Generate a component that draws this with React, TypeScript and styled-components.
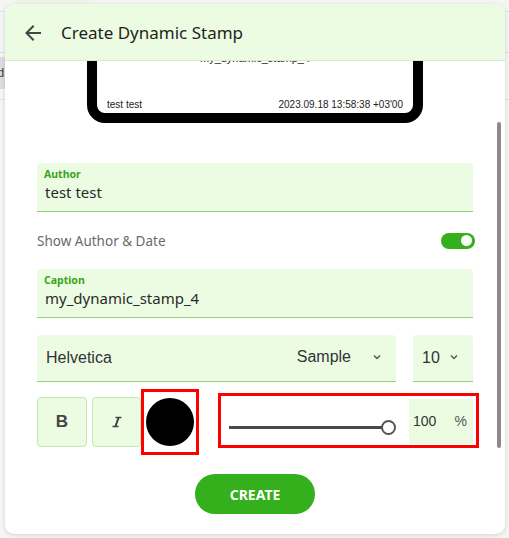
import { FC, useLayoutEffect, useRef } from 'react';
import styled, { createGlobalStyle } from 'styled-components';

const GlobalStyle = createGlobalStyle`
  html, body {
    margin: 0;
    padding: 0;
    height: 100%;
    overflow: hidden;
    background: #f5f5f5;
    font-family: 'Noto Sans', 'Open Sans', sans-serif;
  }
`;

const BackArrow: FC = () => (
  <svg width="24" height="24" viewBox="0 0 24 24">
    <path
      d="M20 11H7.83l5.59-5.59L12 4l-8 8 8 8 1.41-1.41L7.83 13H20v-2z"
      fill="#444"
    />
  </svg>
);

const Chevron: FC = () => (
  <svg width="10" height="10" viewBox="0 0 10 10">
    <path d="M2 3.5l3 3 3-3" fill="none" stroke="#555" strokeWidth="1.4" />
  </svg>
);

const ItalicIcon: FC = () => (
  <svg width="18" height="18" viewBox="0 0 24 24">
    <path d="M10 5v2h2.4l-3.6 10H6v2h8v-2h-2.4l3.6-10H18V5z" fill="#444" />
  </svg>
);

const App: FC = () => {
  const bodyRef = useRef<HTMLDivElement>(null);

  useLayoutEffect(() => {
    if (bodyRef.current) bodyRef.current.scrollTop = 88;
  }, []);

  return (
    <>
      <GlobalStyle />
      <Backdrop>
        <TabStrip>
          <Tab />
        </TabStrip>
        <ToolRow />
        <ListRow>
          <ListCell>d</ListCell>
        </ListRow>
      </Backdrop>

      <Dialog>
        <Header>
          <BackButton>
            <BackArrow />
          </BackButton>
          <Title>Create Dynamic Stamp</Title>
        </Header>

        <Body ref={bodyRef}>
          <Stamp>
            <StampCaption>my_dynamic_stamp_4</StampCaption>
            <StampFooter>
              <span>test test</span>
              <span>2023.09.18 13:58:38 +03'00</span>
            </StampFooter>
          </Stamp>

          <Field $gap={40}>
            <FieldLabel>Author</FieldLabel>
            <FieldValue>test test</FieldValue>
          </Field>

          <SwitchRow>
            <SwitchLabel>Show Author &amp; Date</SwitchLabel>
            <Switch>
              <Knob />
            </Switch>
          </SwitchRow>

          <Field $gap={0}>
            <FieldLabel>Caption</FieldLabel>
            <FieldValue>my_dynamic_stamp_4</FieldValue>
          </Field>

          <FontRow>
            <Select $grow>
              <SelectText>Helvetica</SelectText>
              <SelectSample>Sample</SelectSample>
              <Chevron />
            </Select>
            <Select $width={60}>
              <SelectText>10</SelectText>
              <Chevron />
            </Select>
          </FontRow>

          <StyleRow>
            <StyleButton>
              <BoldGlyph>B</BoldGlyph>
            </StyleButton>
            <StyleButton>
              <ItalicIcon />
            </StyleButton>
            <Highlight $pad="4px 2px">
              <ColorDot />
            </Highlight>
            <OpacityBox>
              <Slider>
                <SliderTrack />
                <SliderThumb />
              </Slider>
              <PercentField>
                <span>100</span>
                <PercentSign>%</PercentSign>
              </PercentField>
            </OpacityBox>
          </StyleRow>

          <Actions>
            <CreateButton>CREATE</CreateButton>
          </Actions>
        </Body>
        <ScrollThumb />
      </Dialog>
    </>
  );
};

export default App;

const Backdrop = styled.div`
  display: flex;
  flex-direction: column;
  height: 100vh;
  background: #f5f5f5;
`;

const TabStrip = styled.div`
  height: 11px;
  border-bottom: 1px solid #e2e2e2;
  padding-left: 15px;
`;

const Tab = styled.div`
  width: 80px;
  height: 8px;
  border-radius: 0 0 12px 12px;
  background: #eef6ea;
`;

const ToolRow = styled.div`
  height: 40px;
  border-bottom: 1px solid #dcdcdc;
`;

const ListRow = styled.div`
  height: 42px;
  padding-top: 4px;
  border-bottom: 1px solid #e2e2e2;
`;

const ListCell = styled.div`
  width: 6px;
  height: 32px;
  background: #dcdcdc;
  color: #444;
  font-family: 'Liberation Sans', Arial, sans-serif;
  font-size: 13px;
  line-height: 32px;
  text-indent: -3px;
  overflow: hidden;
`;

const Dialog = styled.div`
  position: absolute;
  left: 5px;
  top: 4px;
  width: 500px;
  height: 530px;
  display: flex;
  flex-direction: column;
  background: #fff;
  border-radius: 9px;
  overflow: hidden;
  box-shadow: 0 1px 4px rgba(0, 0, 0, 0.14);
`;

const Header = styled.div`
  flex: none;
  display: flex;
  align-items: center;
  gap: 16px;
  height: 56px;
  padding-left: 16px;
  background: #ecfce3;
  border-bottom: 1px solid #d6e9cc;
`;

const BackButton = styled.div`
  display: flex;
  align-items: center;
  justify-content: center;
  width: 24px;
  height: 24px;
  margin-top: 1px;
`;

const Title = styled.div`
  font-size: 17px;
  color: #1f1f1f;
`;

const Body = styled.div`
  flex: 1;
  overflow-y: scroll;
  scrollbar-width: none;
  padding: 16px 32px 145px 32px;
  display: flex;
  flex-direction: column;

  &::-webkit-scrollbar {
    display: none;
  }
`;

const ScrollThumb = styled.div`
  position: absolute;
  right: 4px;
  top: 118px;
  width: 4px;
  height: 326px;
  border-radius: 2px;
  background: #8a8a8a;
`;

const Stamp = styled.div`
  flex: none;
  align-self: center;
  box-sizing: border-box;
  width: 336px;
  height: 134px;
  border: 10px solid #000;
  border-radius: 18px;
  display: flex;
  flex-direction: column;
  justify-content: center;
  position: relative;
  font-family: 'Liberation Sans', Arial, sans-serif;
  color: #222;
`;

const StampCaption = styled.div`
  text-align: center;
  font-size: 11px;
  margin-top: 4px;
`;

const StampFooter = styled.div`
  position: absolute;
  left: 10px;
  right: 10px;
  bottom: 3px;
  display: flex;
  justify-content: space-between;
  font-size: 10px;
`;

const Field = styled.div<{ $gap: number }>`
  flex: none;
  box-sizing: border-box;
  height: 49px;
  margin-top: ${(p) => p.$gap}px;
  padding: 4px 7px 0;
  background: #ecfce3;
  border-radius: 4px 4px 0 0;
  border-bottom: 1px solid #93d07d;
`;

const FieldLabel = styled.div`
  font-size: 10.5px;
  font-weight: 700;
  line-height: 14px;
  color: #3ba221;
`;

const FieldValue = styled.div`
  font-size: 15px;
  line-height: 22px;
  color: #2a2a2a;
  padding-left: 1px;
`;

const SwitchRow = styled.div`
  flex: none;
  display: flex;
  align-items: center;
  justify-content: space-between;
  height: 57px;
`;

const SwitchLabel = styled.div`
  font-size: 13.5px;
  color: #6b6b6b;
`;

const Switch = styled.div`
  box-sizing: border-box;
  width: 34px;
  height: 16px;
  margin-right: -2px;
  border-radius: 8px;
  background: #33b01b;
  display: flex;
  align-items: center;
  justify-content: flex-end;
  padding-right: 3px;
`;

const Knob = styled.div`
  width: 11px;
  height: 11px;
  border-radius: 50%;
  background: #fff;
`;

const FontRow = styled.div`
  flex: none;
  display: flex;
  gap: 17px;
  margin-top: 17px;
`;

const Select = styled.div<{ $grow?: boolean; $width?: number }>`
  box-sizing: border-box;
  flex: ${(p) => (p.$grow ? '1' : 'none')};
  width: ${(p) => (p.$width ? `${p.$width}px` : 'auto')};
  height: 47px;
  display: flex;
  align-items: center;
  gap: 8px;
  padding: 0 14px 0 9px;
  background: #ecfce3;
  border-radius: 4px 4px 0 0;
  border-bottom: 1px solid #93d07d;
  font-family: 'Liberation Sans', Arial, sans-serif;
  font-size: 16px;
  color: #333;

  svg {
    margin-bottom: 2px;
  }
`;

const SelectText = styled.span`
  flex: 1;
`;

const SelectSample = styled.span`
  margin-right: 13px;
  margin-bottom: 3px;
  color: #333;
`;

const StyleRow = styled.div`
  flex: none;
  display: flex;
  align-items: center;
  margin-top: 7px;
  margin-right: -6px;
`;

const StyleButton = styled.div`
  box-sizing: border-box;
  flex: none;
  width: 50px;
  height: 50px;
  display: flex;
  align-items: center;
  justify-content: center;
  margin-right: 5px;
  background: #ecfce3;
  border: 1px solid #c2e9b0;
  border-radius: 4px;

  & + & {
    margin-right: 0;
    width: 49px;
  }
`;

const BoldGlyph = styled.span`
  font-family: 'Liberation Sans', Arial, sans-serif;
  font-weight: 700;
  font-size: 17px;
  color: #444;
`;

const Highlight = styled.div<{ $pad: string }>`
  box-sizing: border-box;
  flex: none;
  border: 3px solid #ff0000;
  padding: ${(p) => p.$pad};
`;

const ColorDot = styled.div`
  width: 48px;
  height: 48px;
  margin: 2px 0;
  border-radius: 50%;
  background: #000;
`;

const OpacityBox = styled.div`
  box-sizing: border-box;
  flex: 1;
  display: flex;
  align-items: stretch;
  height: 55px;
  margin-left: 19px;
  margin-top: -4px;
  padding: 3px 3px 1px 8px;
  border: 3px solid #ff0000;
`;

const Slider = styled.div`
  flex: 1;
  display: flex;
  align-items: center;
  padding-top: 12px;
  margin-right: 13px;
`;

const SliderTrack = styled.div`
  flex: 1;
  height: 3px;
  background: #4a4a4a;
`;

const SliderThumb = styled.div`
  box-sizing: border-box;
  width: 15px;
  height: 15px;
  margin-left: -2px;
  border-radius: 50%;
  background: #fff;
  border: 2px solid #555;
`;

const PercentField = styled.div`
  width: 64px;
  display: flex;
  align-items: center;
  justify-content: space-between;
  padding: 0 6px 0 4px;
  box-sizing: border-box;
  background: #ecfce3;
  font-family: 'Liberation Sans', Arial, sans-serif;
  font-size: 14px;
  color: #333;
`;

const PercentSign = styled.span`
  color: #555;
`;

const Actions = styled.div`
  flex: none;
  display: flex;
  justify-content: center;
  margin-top: 19px;
`;

const CreateButton = styled.button`
  width: 120px;
  height: 40px;
  border: none;
  border-radius: 20px;
  background: #33b01b;
  color: #fff;
  font-family: 'Noto Sans', 'Open Sans', sans-serif;
  font-weight: 700;
  font-size: 14px;
  cursor: pointer;
`;
